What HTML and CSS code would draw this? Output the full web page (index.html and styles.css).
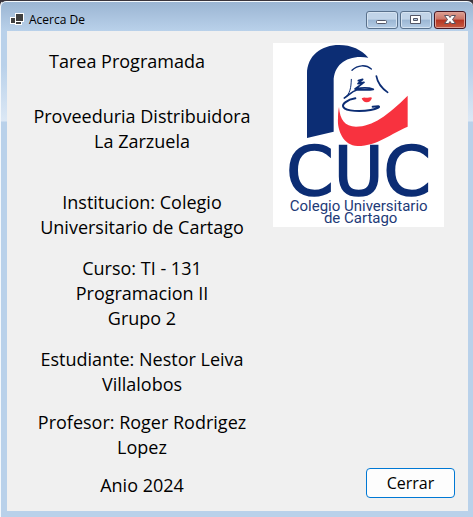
FILE: index.html
```html
<!DOCTYPE html>
<html lang="es">
<head>
<meta charset="utf-8">
<title>Acerca De</title>
<link rel="stylesheet" href="styles.css">
</head>
<body>
<div class="window">
  <header class="titlebar">
    <svg class="app-icon" viewBox="0 0 14 14" aria-hidden="true">
      <path fill="#fff" d="M5 0h9v9h-2v3H5v-1H0V4h5z"/>
      <path fill="#404040" d="M6 1h7v7H6zM1 5h4v5H1zM6 9h5v2H6z"/>
    </svg>
    <h1 class="title">Acerca De</h1>
    <div class="controls">
      <button class="control" type="button" aria-label="Minimizar">
        <svg viewBox="0 0 30 16" aria-hidden="true"><rect x="9.500" y="8.500" width="10" height="3" rx="1" fill="#fff" stroke="#535666"/></svg>
      </button>
      <button class="control" type="button" aria-label="Maximizar">
        <svg viewBox="0 0 30 16" aria-hidden="true"><path fill="#fff" fill-rule="evenodd" stroke="#535666" d="M9.500 3.500h10v8h-10zM12.500 6.500h4v2h-4z"/></svg>
      </button>
      <button class="control control-close" type="button" aria-label="Cerrar ventana">
        <svg viewBox="0 0 30 16" aria-hidden="true"><path fill="#fff" stroke="#59515d" stroke-width="1" d="M9.500 3.500h4l1.500 2 1.500-2h4L17.500 7.500l3 4h-4l-1.500-2-1.500 2h-4l3-4z"/></svg>
      </button>
    </div>
  </header>
  <main class="client">
    <div class="info">
      <p class="line heading">Tarea Programada</p>
      <p class="line company">Proveeduria Distribuidora<br>La Zarzuela</p>
      <p class="line">Institucion: Colegio<br>Universitario de Cartago</p>
      <p class="line spaced">Curso: TI - 131<br>Programacion II<br>Grupo 2</p>
      <p class="line spaced">Estudiante: Nestor Leiva<br>Villalobos</p>
      <p class="line">Profesor: Roger Rodrigez<br>Lopez</p>
      <p class="line">Anio 2024</p>
    </div>
    <div class="side">
      <svg class="logo" viewBox="9 15 513 552" role="img" aria-label="CUC Colegio Universitario de Cartago">
        <rect x="9" y="15" width="513" height="552" fill="#fff"/>
        <path fill="#0c2d74" d="M111 300V108C111 52 155 21 207 21c38 0 67 14 88 38C235 49 191 77 191 130v151z"/>
        <path fill="#f8323f" d="M207 207c3 38 17 59 51 59 50 0 96-35 155-93v93c-48 19-91 58-150 58-43 0-62-48-59-83 0-14 1-24 3-34z"/>
        <g fill="none" stroke="#0c2d74" stroke-linecap="round" stroke-linejoin="round">
          <path stroke-width="4" d="M246 97c17-17 42-18 58-4"/>
          <path stroke-width="3" d="M244 124c-1 26-3 42-20 56"/>
          <path stroke-width="5" d="M319 114c4 22 15 36 34 49"/>
          <path stroke-width="5" d="M265 128l13-4-14 13 18-4-27 20c20-4 40-5 55 1-18 4-36 0-50 2-16 4-24 17-37 24"/>
          <path stroke-width="6" d="M256 181c-25 4-41 18-36 26 8 14 55 14 82 9 20-4 30-10 23-11l-17 1"/>
        </g>
        <path fill="#f8323f" d="M275 181c9-5 13 0 18-2 6-2 10-2 13 0-3 9-8 14-16 14s-13-5-15-12z"/>
        <text class="logo-name" x="266" y="471">CUC</text>
        <text class="logo-caption" x="266" y="519">Colegio Universitario</text>
        <text class="logo-caption" x="272" y="555">de Cartago</text>
      </svg>
      <button class="close" type="button">Cerrar</button>
    </div>
  </main>
</div>
</body>
</html>
```
FILE: styles.css
```css
* {
  box-sizing: border-box;
}

body {
  margin: 0;
  background: #3a343c;
  color: #000;
  font-family: "Segoe UI", "Open Sans", "Noto Sans", sans-serif;
}

.window {
  display: flex;
  flex-direction: column;
  min-height: 100vh;
  padding: 0 5px 6px 6px;
  border-top: 1px solid #3a343c;
  border-left: 1px solid #f4f8fc;
  border-radius: 6px 6px 0 0;
  background: linear-gradient(#9ab4d2, #b9d1ea 30px, #b9d1ea 65px, #dce8f5 120px, #b9d1ea 121px);
  box-shadow: inset 0 1px #f4f8fc;
}

.titlebar {
  display: flex;
  align-items: center;
  height: 30px;
  padding: 7px 2px 0 3px;
}

.app-icon {
  width: 14px;
  height: 14px;
}

.title {
  flex: 1;
  margin: 0 0 0 5px;
  font-size: 12px;
  font-weight: 400;
  line-height: 16px;
}

.controls {
  display: flex;
  gap: 2px;
}

.control {
  width: 32px;
  height: 18px;
  padding: 0;
  border: 1px solid #59718c;
  border-radius: 3px;
  background: linear-gradient(#c1d4e8 45%, #9bb6d3 50%, #b5cde6);
  box-shadow: inset 0 0 0 1px #d5e3f1;
}

.control svg {
  display: block;
  width: 30px;
  height: 16px;
}

.control-close {
  border-color: #471722;
  background: linear-gradient(#dda093, #cb7466 45%, #b43320 50%, #c75b43);
  box-shadow: inset 0 0 0 1px #dfa095;
}

.client {
  display: flex;
  flex: 1;
  justify-content: space-between;
  padding: 12px 13px 13px 20px;
  background: #f0f0f0;
}

.info {
  display: flex;
  flex-direction: column;
  gap: 13px;
  padding-top: 6px;
  width: 230px;
}

.line {
  margin: 0;
  font-size: 18px;
  line-height: 25px;
  text-align: center;
}

.heading {
  padding-right: 30px;
}

.company {
  margin: 17px 0 23px;
}

.spaced {
  margin-top: 3px;
}

.side {
  display: flex;
  flex-direction: column;
  justify-content: space-between;
  align-items: flex-end;
}

.logo {
  width: 171px;
  height: 184px;
  margin-right: 11px;
}

.logo-name {
  fill: #0c2d74;
  stroke: #0c2d74;
  stroke-width: 5px;
  font-family: "DejaVu Sans", sans-serif;
  font-size: 204px;
  text-anchor: middle;
}

.logo-caption {
  fill: #1d3a78;
  font-family: Roboto, sans-serif;
  font-size: 45px;
  text-anchor: middle;
}

.close {
  width: 89px;
  height: 30px;
  padding: 0;
  border: 1px solid #0078d4;
  border-radius: 4px;
  background: #fdfdfd;
  color: #000;
  font: inherit;
  font-size: 16px;
}
```
